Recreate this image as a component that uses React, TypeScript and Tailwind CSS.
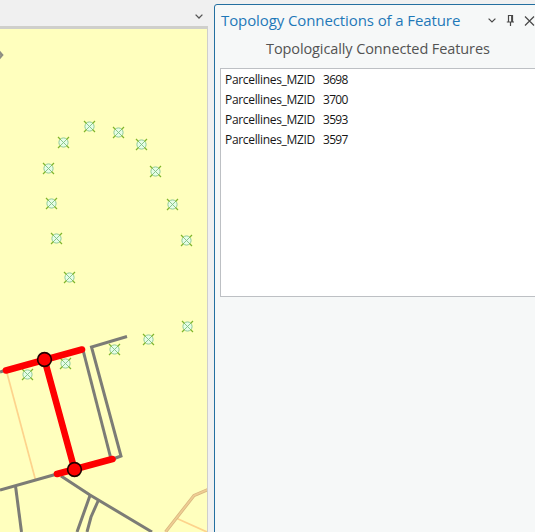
const monuments: [number, number][] = [
  [89.5, 126.5], [118.5, 132.5], [63.5, 142.5], [141.5, 144.5],
  [48.5, 168.5], [155.5, 171.5], [51.5, 203.5], [172.5, 204.5],
  [56.5, 238.5], [186.5, 240.5], [69.5, 277.5], [187.5, 326.5],
  [148.5, 339.5], [114.5, 349.5], [65.5, 363.5], [27.5, 374.5],
];

const connected = ['3698', '3700', '3593', '3597'];

function Monument({ x, y }: { x: number; y: number }) {
  return (
    <g transform={`translate(${x} ${y})`}>
      <circle r="4.6" fill="#e6fde6" stroke="#8fcb9c" strokeWidth="1" />
      <path d="M-3.500-3.500 3.500 3.500M3.500-3.500-3.500 3.500" stroke="#7fbf84" strokeWidth=".9" />
      <path d="M-5.500-5.500-3-3M5.500 5.500 3 3M5.500-5.500 3-3M-5.500 5.500-3 3" stroke="#7fb52c" strokeWidth="1.2" />
    </g>
  );
}

function ParcelMap() {
  return (
    <svg className="block h-[503px] w-[207px]" viewBox="0 29 207 503" fill="none">
      <path d="M-2 50.5 2 55-2 59.5" stroke="#8f8f83" strokeWidth="2.5" />
      <g stroke="#fdd38c" strokeWidth="1.7">
        <path d="M7 373 35.500 480" />
        <path d="M177 518.500 207 532" />
      </g>
      <path d="M165.500 532 194 495.500 208 489.500" stroke="#d9b77f" strokeWidth="3.2" />
      <path d="M165.500 532 194 495.500 208 489.500" stroke="#efcd94" strokeWidth="1.6" />
      <g stroke="#7c7c76" strokeWidth="3">
        <path d="M0 372 6 370" />
        <path d="M83 350 111 459" />
        <path d="M127 336.500 91.500 347 121 456 113 459" />
        <path d="M0 490 57 474 M61 476 90 495 152 532" />
        <path d="M15.500 486 21.500 532" />
        <path d="M90 495.500 77 532M98.500 500 91 517 87 532" />
      </g>
      {monuments.map(([x, y]) => (
        <Monument key={`${x}-${y}`} x={x} y={y} />
      ))}
      <g stroke="#fe0000" strokeWidth="6.6" strokeLinecap="round">
        <path d="M6 370.500 82 349.500" />
        <path d="M44.500 359.500 74.500 469.500" />
        <path d="M57 474 112.500 459" />
      </g>
      <g fill="#fe0000" stroke="#210000" strokeWidth="1.6">
        <circle cx="44.500" cy="359.500" r="6.900" />
        <circle cx="74.500" cy="469.500" r="6.900" />
      </g>
    </svg>
  );
}

function Chevron() {
  return (
    <svg className="h-[5px] w-2" viewBox="0 0 8 5" fill="none" stroke="#555" strokeWidth="1.3">
      <path d="M.6.6 4 4 7.400.6" />
    </svg>
  );
}

export default function App() {
  return (
    <div className="flex h-[532px] w-[535px] overflow-hidden bg-[#f0f0f0] font-['Open_Sans',sans-serif]">
      <section className="w-[208px] shrink-0">
        <div className="flex h-[26px] items-start justify-end pt-[14px] pr-[5px]">
          <Chevron />
        </div>
        <div className="h-[506px] border-t-[3px] border-r border-[#cfcfcb] bg-[#ffffbe]">
          <ParcelMap />
        </div>
      </section>
      <aside className="mt-1 ml-[6px] h-[540px] w-[340px] shrink-0 rounded-tl-[3px] border border-[#236fa0] bg-[#f6f8f8]">
        <header className="flex h-[31px] items-center">
          <h1 className="ml-[6px] w-[267px] text-[15px] leading-[31px] tracking-[-0.1px] whitespace-nowrap text-[#1f78b8]">
            Topology Connections of a Feature
          </h1>
          <svg className="h-[14px] w-[48px]" viewBox="0 0 48 14" fill="none" stroke="#484848" strokeWidth="1.2">
            <path d="M.6 4.600 4 8 7.400 4.600" />
            <path d="M20.500 8V1.500H24.500V8M23.700 2V8M18.800 8H26M22.500 8V12" />
            <path d="M37 2.500 46 11.500M46 2.500 37 11.500" />
          </svg>
        </header>
        <h2 className="ml-[51px] h-[32px] text-[14.500px] leading-[25px] tracking-[-0.1px] whitespace-nowrap text-[#535353]">
          Topologically Connected Features
        </h2>
        <ul className="ml-[5px] h-[229px] w-[340px] border border-[#bdc0c4] bg-white pt-px text-xs leading-5 text-[#161616]">
          {connected.map((id) => (
            <li key={id} className="flex h-5 items-center pl-1">
              <span className="w-[98px] tracking-[-0.33px]">Parcellines_MZID</span>
              <span className="tracking-[-0.7px]">{id}</span>
            </li>
          ))}
        </ul>
      </aside>
    </div>
  );
}
